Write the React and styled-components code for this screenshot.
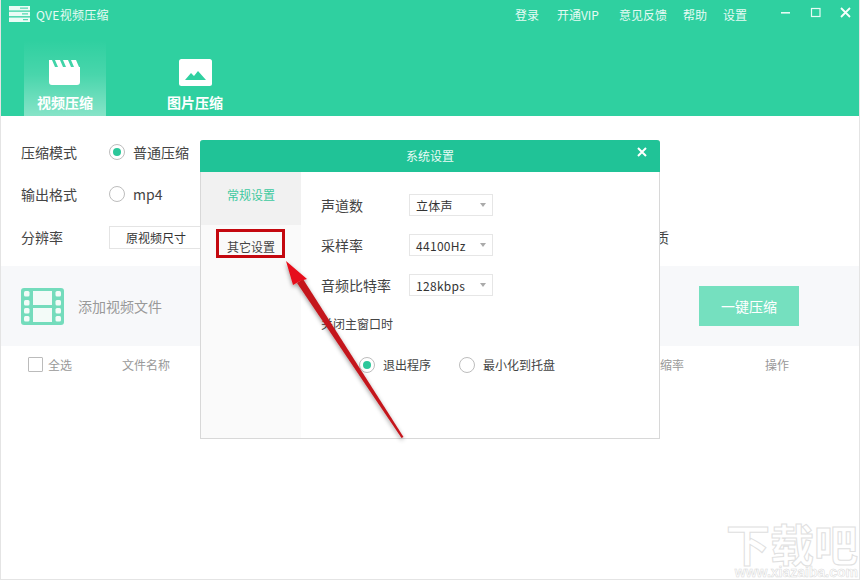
import React from 'react';
import styled, { createGlobalStyle } from 'styled-components';

const GlobalStyle = createGlobalStyle`
  html, body {
    margin: 0;
    padding: 0;
    background: #ffffff;
  }
  body {
    font-family: "Noto Sans CJK SC", "Noto Sans", sans-serif;
  }
`;

const Window = styled.div`
  position: relative;
  width: 860px;
  height: 580px;
  overflow: hidden;
  background: #ffffff;
  border: 1px solid #e4e4e4;
  border-top: none;
  box-sizing: border-box;
`;

const Header = styled.header`
  height: 116px;
  background: #2fd0a0;
  display: flex;
  flex-direction: column;
  margin: 0 -1px;
`;

const TitleBar = styled.div`
  height: 28px;
  display: flex;
  align-items: center;
  padding-left: 9px;
  color: #e6fbf4;
  font-size: 12px;
`;

const AppName = styled.span`
  margin-left: 6px;
  flex: 1;
  letter-spacing: 0.3px;
`;

const TopLink = styled.span`
  margin-right: ${props => props.$gap}px;
  font-size: 12px;
  white-space: nowrap;
`;

const WinControls = styled.div`
  display: flex;
  align-items: center;
  gap: 14px;
  margin-left: 31px;
  margin-right: 6px;
  margin-top: -2px;
`;

const Tabs = styled.nav`
  display: flex;
  padding-left: 24px;
  margin-top: 12px;
  flex: 1;
`;

const Tab = styled.div`
  width: 82px;
  margin-right: 48px;
  display: flex;
  flex-direction: column;
  align-items: center;
  justify-content: flex-end;
  padding-bottom: 4px;
  color: #ffffff;
  font-size: 14px;
  line-height: 20px;
  font-weight: 700;
  gap: 6px;
  background: ${props => props.$active
    ? 'linear-gradient(to bottom, rgba(255,255,255,0) 0%, rgba(255,255,255,0.12) 45%, rgba(255,255,255,0.42) 100%)'
    : 'none'};
`;

const Options = styled.section`
  height: 150px;
  padding: 22px 0 0 20px;
  box-sizing: border-box;
  display: flex;
  flex-direction: column;
`;

const OptionRow = styled.div`
  height: 28px;
  margin-bottom: ${props => props.$mb}px;
  display: flex;
  align-items: center;
  font-size: 14px;
  color: #444444;
`;

const OptionLabel = styled.span`
  width: 88px;
`;

const Radio = styled.span`
  width: 14px;
  height: 14px;
  border: 1px solid #bdbdbd;
  border-radius: 50%;
  background: #ffffff;
  display: inline-flex;
  align-items: center;
  justify-content: center;
  margin-right: 8px;
  flex-shrink: 0;

  &::after {
    content: '';
    width: 8px;
    height: 8px;
    border-radius: 50%;
    background: ${props => (props.$checked ? '#2cc79a' : 'transparent')};
  }
`;

const ResolutionBox = styled.div`
  width: 120px;
  height: 21px;
  border: 1px solid #e4e4e4;
  padding-left: 16px;
  font-size: 12px;
  line-height: 21px;
  color: #333333;
`;

const QualityText = styled.span`
  margin-left: 394px;
  white-space: nowrap;
`;

const Toolbar = styled.section`
  height: 80px;
  background: #f7f8fa;
  display: flex;
  align-items: center;
  padding-left: 20px;
`;

const AddText = styled.span`
  margin-left: 14px;
  flex: 1;
  font-size: 14px;
  color: #999999;
`;

const CompressButton = styled.button`
  width: 100px;
  height: 40px;
  margin-right: 60px;
  border: none;
  background: #75e0bf;
  color: #ffffff;
  font-family: inherit;
  font-size: 14px;
`;

const ColumnRow = styled.div`
  height: 37px;
  display: grid;
  grid-template-columns: 94px 526px 117px 1fr;
  align-items: center;
  padding-left: 27px;
  font-size: 12px;
  color: #999999;
`;

const SelectAll = styled.label`
  display: flex;
  align-items: center;
  gap: 5px;
`;

const CheckBox = styled.span`
  width: 13px;
  height: 13px;
  border: 1px solid #bbbbbb;
  border-radius: 1px;
  background: #ffffff;
`;

const Dialog = styled.div`
  position: absolute;
  left: 199px;
  top: 140px;
  width: 460px;
  height: 299px;
  background: #ffffff;
  border: 1px solid #d8d8d8;
  border-top: none;
  border-radius: 3px 3px 0 0;
  box-sizing: border-box;
  display: flex;
  flex-direction: column;
`;

const DialogHead = styled.div`
  position: relative;
  height: 32px;
  margin: 0 -1px;
  background: #20c397;
  border-radius: 3px 3px 0 0;
  color: #e9fbf5;
  font-size: 12px;
  line-height: 31px;
  text-align: center;
`;

const DialogClose = styled.svg`
  position: absolute;
  right: 12px;
  top: 6px;
`;

const DialogBody = styled.div`
  flex: 1;
  display: flex;
`;

const Side = styled.aside`
  width: 100px;
  background: #fafafa;
  display: flex;
  flex-direction: column;
`;

const SideItem = styled.div`
  height: ${props => (props.$active ? 53 : 43)}px;
  padding-bottom: ${props => (props.$active ? 9 : 0)}px;
  box-sizing: border-box;
  background: ${props => (props.$active ? '#f1f1f1' : 'transparent')};
  color: ${props => (props.$active ? '#3ec9a0' : '#444444')};
  font-size: 12px;
  display: flex;
  align-items: center;
  justify-content: center;
`;

const Settings = styled.div`
  flex: 1;
  padding: 22px 0 0 20px;
  display: flex;
  flex-direction: column;
`;

const SettingRow = styled.div`
  height: 22px;
  margin-bottom: 18px;
  display: flex;
  align-items: center;
  font-size: 14px;
  color: #444444;
`;

const SettingLabel = styled.span`
  width: 88px;
`;

const Select = styled.div`
  width: 76px;
  height: 20px;
  border: 1px solid #e6e6e6;
  padding-left: 6px;
  display: flex;
  align-items: center;
  justify-content: space-between;
  font-size: 12px;
  letter-spacing: 0.3px;
  color: #333333;

  &::after {
    content: '';
    margin-right: 6px;
    border-left: 3px solid transparent;
    border-right: 3px solid transparent;
    border-top: 4px solid #aaaaaa;
  }
`;

const CloseLabel = styled.div`
  font-size: 12px;
  color: #444444;
  margin-top: 1px;
`;

const RadioGroup = styled.div`
  display: flex;
  align-items: center;
  margin: 24px 0 0 38px;
  font-size: 12px;
  color: #444444;
`;

const RadioText = styled.span`
  margin-right: ${props => props.$mr}px;
`;

const Callout = styled.div`
  position: absolute;
  left: 215px;
  top: 229px;
  width: 69px;
  height: 29px;
  box-sizing: border-box;
  border: 3px solid #c4080f;
`;

const ArrowOverlay = styled.svg`
  position: absolute;
  left: 269px;
  top: 250px;
  pointer-events: none;
`;

const Watermark = styled.div`
  position: absolute;
  right: 1px;
  bottom: 0;
  display: flex;
  flex-direction: column;
  align-items: flex-end;
  color: #ffffff;
  -webkit-text-stroke: 1px #e0e0e0;
  font-weight: 700;
  line-height: 1;
`;

const WatermarkName = styled.span`
  font-size: 44px;
  margin-bottom: 1px;
`;

const WatermarkUrl = styled.span`
  font-size: 14px;
  line-height: 13px;
  -webkit-text-stroke: 0.5px #d8d8d8;
  font-family: "Liberation Sans", sans-serif;
`;

const LogoIcon = () => (
  <svg width="21" height="16" viewBox="0 0 21 16">
    <g fill="#eafcf6">
      <rect x="0" y="0" width="21" height="4.5" />
      <rect x="0" y="5.7" width="21" height="4.5" />
      <rect x="0" y="11.5" width="21" height="4.5" />
    </g>
    <g fill="#2fd0a0">
      <rect x="11" y="1.6" width="8" height="1" />
      <rect x="13" y="7.4" width="6" height="1" />
      <rect x="14" y="13.2" width="5" height="1" />
    </g>
  </svg>
);

const ClapperIcon = () => (
  <svg width="32" height="27" viewBox="0 0 32 27">
    <path
      d="M0 1h3l3 7h3L6 1h5l3 7h3l-3-7h5l3 7h3l-3-7h5l3 7h1V23a3 3 0 0 1-3 3H3a3 3 0 0 1-3-3Z"
      fill="#ffffff"
    />
  </svg>
);

const PictureIcon = () => (
  <svg width="33" height="27" viewBox="0 0 33 27">
    <rect x="0" y="0" width="33" height="27" rx="2.5" fill="#ffffff" />
    <path d="M6 21l6-7 3 3 4-5 8 9Z" fill="#2fd0a0" />
  </svg>
);

const FilmIcon = () => (
  <svg width="43" height="37" viewBox="0 0 43 37">
    <rect x="0" y="0" width="43" height="37" rx="3" fill="#74dcbc" />
    <g fill="#f3fbf8">
      <rect x="12" y="3" width="19" height="14" />
      <rect x="12" y="20" width="19" height="14" />
      {[3, 12, 20, 28].map(y => (
        <React.Fragment key={y}>
          <rect x="3" y={y} width="5.5" height="5.5" rx="1.5" />
          <rect x="34.5" y={y} width="5.5" height="5.5" rx="1.5" />
        </React.Fragment>
      ))}
    </g>
  </svg>
);

const App = () => (
  <Window>
    <GlobalStyle />
    <Header>
      <TitleBar>
        <LogoIcon />
        <AppName>QVE视频压缩</AppName>
        <TopLink $gap={18}>登录</TopLink>
        <TopLink $gap={20}>开通VIP</TopLink>
        <TopLink $gap={16}>意见反馈</TopLink>
        <TopLink $gap={16}>帮助</TopLink>
        <TopLink $gap={0}>设置</TopLink>
        <WinControls>
          <svg width="16" height="12" viewBox="0 0 16 12">
            <rect x="3" y="5" width="9" height="1.6" fill="#e6fbf4" />
          </svg>
          <svg width="16" height="12" viewBox="0 0 16 12">
            <rect x="3.5" y="1.5" width="8.5" height="8" fill="none" stroke="#e6fbf4" strokeWidth="1.2" />
          </svg>
          <svg width="16" height="12" viewBox="0 0 16 12">
            <path d="M3 1l9 9M12 1l-9 9" stroke="#f4fffb" strokeWidth="1.8" />
          </svg>
        </WinControls>
      </TitleBar>
      <Tabs>
        <Tab $active>
          <ClapperIcon />
          视频压缩
        </Tab>
        <Tab>
          <PictureIcon />
          图片压缩
        </Tab>
      </Tabs>
    </Header>

    <Options>
      <OptionRow $mb={14}>
        <OptionLabel>压缩模式</OptionLabel>
        <Radio $checked />
        普通压缩
      </OptionRow>
      <OptionRow $mb={15}>
        <OptionLabel>输出格式</OptionLabel>
        <Radio />
        mp4
      </OptionRow>
      <OptionRow $mb={0}>
        <OptionLabel>分辨率</OptionLabel>
        <ResolutionBox>原视频尺寸</ResolutionBox>
        <QualityText>画质</QualityText>
      </OptionRow>
    </Options>

    <Toolbar>
      <FilmIcon />
      <AddText>添加视频文件</AddText>
      <CompressButton>一键压缩</CompressButton>
    </Toolbar>

    <ColumnRow>
      <SelectAll>
        <CheckBox />
        全选
      </SelectAll>
      <span>文件名称</span>
      <span>压缩率</span>
      <span>操作</span>
    </ColumnRow>

    <Dialog>
      <DialogHead>
        系统设置
        <DialogClose width="12" height="12" viewBox="0 0 12 12">
          <path d="M2 2l8 8M10 2l-8 8" stroke="#ffffff" strokeWidth="2" />
        </DialogClose>
      </DialogHead>
      <DialogBody>
        <Side>
          <SideItem $active>常规设置</SideItem>
          <SideItem>其它设置</SideItem>
        </Side>
        <Settings>
          <SettingRow>
            <SettingLabel>声道数</SettingLabel>
            <Select>立体声</Select>
          </SettingRow>
          <SettingRow>
            <SettingLabel>采样率</SettingLabel>
            <Select>44100Hz</Select>
          </SettingRow>
          <SettingRow>
            <SettingLabel>音频比特率</SettingLabel>
            <Select>128kbps</Select>
          </SettingRow>
          <CloseLabel>关闭主窗口时</CloseLabel>
          <RadioGroup>
            <Radio $checked />
            <RadioText $mr={28}>退出程序</RadioText>
            <Radio />
            <RadioText $mr={0}>最小化到托盘</RadioText>
          </RadioGroup>
        </Settings>
      </DialogBody>
    </Dialog>

    <Callout />

    <ArrowOverlay width="140" height="195" viewBox="0 0 140 195">
      <defs>
        <filter id="arrowShadow" x="-20%" y="-20%" width="140%" height="140%">
          <feDropShadow dx="0" dy="2" stdDeviation="2" floodColor="#000000" floodOpacity="0.4" />
        </filter>
      </defs>
      <g filter="url(#arrowShadow)">
        <path d="M27 33L33 29L133.5 187L131.5 188Z" fill="#c4161c" />
        <path d="M16 11L23 35L30 31L37 29Z" fill="#e6101a" />
      </g>
    </ArrowOverlay>

    <Watermark>
      <WatermarkName>下载吧</WatermarkName>
      <WatermarkUrl>www.xiazaiba.com</WatermarkUrl>
    </Watermark>
  </Window>
);

export default App;
